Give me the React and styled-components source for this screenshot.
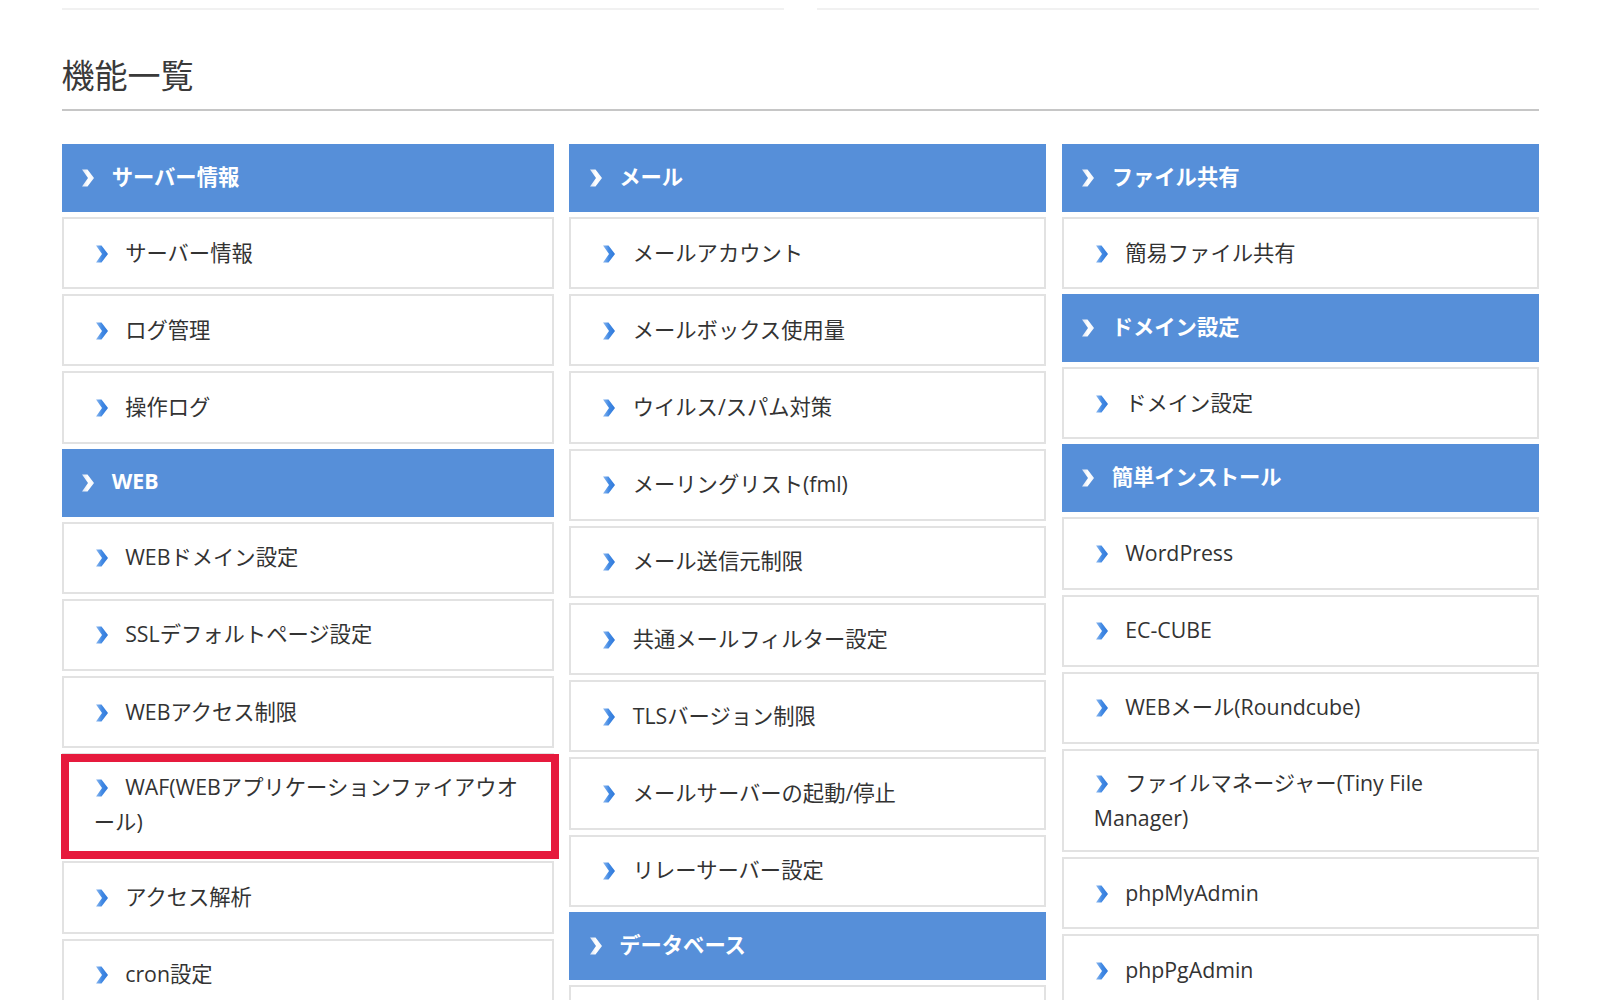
import React from 'react';
import styled, { createGlobalStyle } from 'styled-components';

const GlobalStyle = createGlobalStyle`
  body {
    margin: 0;
    background: #fff;
    font-family: "Open Sans", "Noto Sans CJK JP", sans-serif;
    color: #333;
  }
`;

const columns = [
  [
    { header: true, label: 'サーバー情報' },
    { label: 'サーバー情報' },
    { label: 'ログ管理' },
    { label: '操作ログ' },
    { header: true, label: 'WEB' },
    { label: 'WEBドメイン設定' },
    { label: 'SSLデフォルトページ設定' },
    { label: 'WEBアクセス制限' },
    { label: 'WAF(WEBアプリケーションファイアウオール)', highlight: true },
    { label: 'アクセス解析' },
    { label: 'cron設定' },
  ],
  [
    { header: true, label: 'メール' },
    { label: 'メールアカウント' },
    { label: 'メールボックス使用量' },
    { label: 'ウイルス/スパム対策' },
    { label: 'メーリングリスト(fml)' },
    { label: 'メール送信元制限' },
    { label: '共通メールフィルター設定' },
    { label: 'TLSバージョン制限' },
    { label: 'メールサーバーの起動/停止' },
    { label: 'リレーサーバー設定' },
    { header: true, label: 'データベース' },
    { label: 'MySQL' },
  ],
  [
    { header: true, label: 'ファイル共有' },
    { label: '簡易ファイル共有' },
    { header: true, label: 'ドメイン設定' },
    { label: 'ドメイン設定' },
    { header: true, label: '簡単インストール' },
    { label: 'WordPress' },
    { label: 'EC-CUBE' },
    { label: 'WEBメール(Roundcube)' },
    { label: 'ファイルマネージャー(Tiny File Manager)' },
    { label: 'phpMyAdmin' },
    { label: 'phpPgAdmin' },
  ],
];

const Page = styled.div`
  max-width: 1477px;
  margin: 0 auto;
`;

const TopRule = styled.div`
  display: flex;
  gap: 33px;
`;

const TopSegment = styled.div`
  flex: 1;
  height: 8px;
  border-bottom: 2px solid #f1f1f1;
`;

const Title = styled.h2`
  margin: 48px 0 0;
  padding-bottom: 18px;
  border-bottom: 2px solid #c6c6c6;
  font-size: 33px;
  line-height: 33px;
  font-weight: 400;
  color: #3a3a3a;
  font-family: "Noto Sans CJK JP", sans-serif;
`;

const Grid = styled.div`
  display: grid;
  grid-template-columns: 492px 477px 477px;
  column-gap: 15.5px;
  margin-top: 33px;
  align-items: start;
`;

const Column = styled.div`
  display: flex;
  flex-direction: column;
`;

const SectionHeader = styled.div`
  display: flex;
  align-items: center;
  gap: 17.5px;
  box-sizing: border-box;
  height: 68px;
  margin-bottom: 5px;
  padding: 0 0 5px 20.7px;
  background: #568fd9;
  color: #fff;
  font-size: 21.3px;
  font-weight: 700;
`;

const Item = styled.div`
  position: relative;
  display: flex;
  align-items: center;
  box-sizing: border-box;
  min-height: 72.2px;
  margin-bottom: 5px;
  padding: 13.6px 20px 15.6px 30.3px;
  border: 2px solid #e2e2e2;
  background: #fff;
  font-size: 21.3px;
  line-height: 35px;
  color: #333;
  line-break: loose;

  ${props => props.highlight && `
    &::after {
      content: '';
      position: absolute;
      top: -1px;
      left: -3px;
      right: -7px;
      bottom: -5px;
      border: 8px solid #e61a3d;
      pointer-events: none;
    }
  `}
`;

const Label = styled.span`
  display: block;
`;

const ChevronSvg = styled.svg`
  display: inline-block;
  flex: none;
  width: 12px;
  height: 18px;
  vertical-align: -2px;
  margin: ${props => (props.inline ? '0 17.4px 0 2px' : '5px 0 0')};
`;

const Chevron = ({ light, inline }) => {
  const id = light ? 'chev-light' : 'chev-blue';
  return (
    <ChevronSvg inline={inline} viewBox="0 0 12 18">
      <defs>
        <linearGradient id={id} x1="0" y1="0" x2="1" y2="0">
          <stop offset="0" stopColor={light ? '#d9e3f2' : '#8cb8ef'} />
          <stop offset="0.5" stopColor={light ? '#ffffff' : '#4189e4'} />
          <stop offset="1" stopColor={light ? '#f2f6fb' : '#3079da'} />
        </linearGradient>
      </defs>
      <polygon points="0,0.5 5.5,0.5 12,9 5.5,17.5 0,17.5 6,9" fill={`url(#${id})`} />
    </ChevronSvg>
  );
};

const App = () => (
  <>
    <GlobalStyle />
    <Page>
      <TopRule>
        <TopSegment />
        <TopSegment />
      </TopRule>
      <Title>機能一覧</Title>
      <Grid>
        {columns.map((col, ci) => (
          <Column key={ci}>
            {col.map((entry, i) =>
              entry.header ? (
                <SectionHeader key={i}>
                  <Chevron light />
                  <span>{entry.label}</span>
                </SectionHeader>
              ) : (
                <Item key={i} highlight={entry.highlight}>
                  <Label>
                    <Chevron inline />
                    {entry.label}
                  </Label>
                </Item>
              )
            )}
          </Column>
        ))}
      </Grid>
    </Page>
  </>
);

export default App;
